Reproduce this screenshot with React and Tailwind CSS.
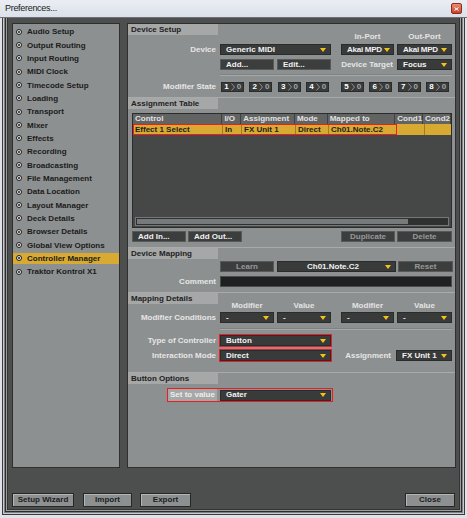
import React from 'react';

const menu = [
  'Audio Setup', 'Output Routing', 'Input Routing', 'MIDI Clock', 'Timecode Setup', 'Loading',
  'Transport', 'Mixer', 'Effects', 'Recording', 'Broadcasting', 'File Management', 'Data Location',
  'Layout Manager', 'Deck Details', 'Browser Details', 'Global View Options', 'Controller Manager',
  'Traktor Kontrol X1',
];

const Arrow = () => (
  <span className="shrink-0 ml-[2px] w-0 h-0 border-x-[3px] border-x-transparent border-t-[4px] border-t-[#f4c21b]" />
);

const Drop = ({ className = '', center, children }) => (
  <div className={`flex items-center h-[11px] bg-[#393b3b] border border-[#2a2b2b] pl-[5px] pr-[4px] text-[#f2f2f2] whitespace-nowrap overflow-hidden ${className}`}>
    <span className={center ? 'flex-1 text-center' : 'flex-1'}>{children}</span>
    <Arrow />
  </div>
);

const Btn = ({ className = '', dim, children }) => (
  <div
    className={`flex items-center h-[11px] bg-[#3c3e3e] border border-[#585a5a] whitespace-nowrap ${
      dim ? 'justify-center text-[#979999]' : 'pl-[5px] text-[#f0f0f0]'
    } ${className}`}
  >
    {children}
  </div>
);

const Mod = ({ n }) => (
  <div className="flex items-center h-[10px] w-[23px] bg-[#3a3c3c] border border-[#2a2b2b]">
    <span className="w-[9px] text-center text-white">{n}</span>
    <svg width="4" height="8" viewBox="0 0 4 8" className="shrink-0">
      <path d="M0.5 0.5 L3.5 4 L0.5 7.5" fill="none" stroke="#8f9191" strokeWidth="1" />
    </svg>
    <span className="flex-1 text-center text-[#a3a5a5]">0</span>
  </div>
);

const Header = ({ title, first, className = '' }) => (
  <div className={`${first ? '' : 'border-t border-[#a9abab]'} ${className}`}>
    <div className="h-[11px] w-[90px] bg-[#a6a8a8] pl-[3px] flex items-center text-[#222]">{title}</div>
  </div>
);

const Row = ({ label, className = '', children }) => (
  <div className={`flex items-center ${className}`}>
    <div className="w-[88px] text-right text-[#e6e6e6] whitespace-nowrap">{label}</div>
    <div className="ml-[4px] flex items-center">{children}</div>
  </div>
);

const Sep = ({ className = '' }) => (
  <div className={`ml-[92px] w-[232px] h-[2px] border-t border-[#7f8282] bg-[#a6a8a8] ${className}`} />
);

const cols = [
  { t: 'Control', w: 'w-[90px]' },
  { t: 'I/O', w: 'w-[19px]' },
  { t: 'Assignment', w: 'w-[54px]' },
  { t: 'Mode', w: 'w-[33px]' },
  { t: 'Mapped to', w: 'w-[68px]' },
  { t: 'Cond1', w: 'w-[28px]' },
  { t: 'Cond2', w: 'flex-1' },
];

const WinBtn = ({ className = '', children }) => (
  <div
    className={`h-[14px] flex items-center justify-center bg-[#8d9090] border border-[#262727] shadow-[inset_1px_1px_0_#b4b6b6] text-[#1c1c1c] ${className}`}
  >
    {children}
  </div>
);

export default function App() {
  return (
    <div className="w-[467px] h-[518px] overflow-hidden flex flex-col bg-[#dfe4eb] font-['Liberation_Sans',Arial,sans-serif] text-[8px] font-bold leading-none">
      {/* title bar */}
      <div className="h-[18px] shrink-0 flex items-center justify-between pl-[5px] pr-[5px] bg-linear-to-b from-[#eaeef4] to-[#dbe1e9] border-b border-[#6d7076]">
        <span className="text-[9px] font-normal tracking-[-0.3px] text-[#1a1a1a]">Preferences...</span>
        <div className="w-[11px] h-[11px] rounded-[2px] bg-linear-to-b from-[#eb8a6f] to-[#c8412a] border border-[#8c2f1f] flex items-center justify-center">
          <svg width="5" height="4" viewBox="0 0 5 4">
            <path d="M0.5 0.5 L4.5 3.5 M4.5 0.5 L0.5 3.5" stroke="white" strokeWidth="1" />
          </svg>
        </div>
      </div>

      {/* window frame */}
      <div className="flex-1 flex px-[2px] pb-[3px] bg-[#dfe3e9]">
        <div className="flex-1 flex border-x border-b border-[#3a3b3d]">
          <div className="flex-1 flex border-x border-b border-[#c9cccf]">
            <div className="flex-1 flex border-x border-b border-[#7f8183]">
              <div className="flex-1 flex border-x border-b border-[#2b2c2c]">
                <div className="flex-1 flex border-x border-b border-[#9c9e9e]">
                  <div className="flex-1 flex flex-col border-x border-b border-[#333434] bg-[#4d4f4f] pt-[5px] pl-[4px] pr-[3px]">
                    <div className="h-[445px] flex gap-[7px]">
                      {/* sidebar */}
                      <div className="w-[108px] border border-[#2e3030] bg-[#8d9090] pt-[2.8px] flex flex-col gap-[2.33px]">
                        {menu.map((m) => (
                          <div
                            key={m}
                            className={`h-[11px] flex items-center pl-[3px] text-[#1b1b1b] whitespace-nowrap ${
                              m === 'Controller Manager' ? 'bg-[#d8aa32]' : ''
                            }`}
                          >
                            <span className="w-[6px] h-[6px] rounded-full border border-[#1a1a1a] bg-[#e8e8e8] flex items-center justify-center mb-[1px]">
                              <span className="w-[2px] h-[2px] rounded-full bg-[#1a1a1a]" />
                            </span>
                            <span className="ml-[5px]">{m}</span>
                          </div>
                        ))}
                      </div>

                      {/* settings panel */}
                      <div className="flex-1 border border-[#2e3030] bg-[#8d9090] flex flex-col">
                        <Header title="Device Setup" first />
                        <div className="mt-[-2.7px] h-[10px] flex items-center text-[#e4e4e4]">
                          <div className="w-[213px]" />
                          <div className="w-[53px] text-center">In-Port</div>
                          <div className="ml-[3px] w-[55px] text-center">Out-Port</div>
                        </div>
                        <Row label="Device" className="mt-[1.7px]">
                          <Drop className="w-[111px]">Generic MIDI</Drop>
                          <Drop className="ml-[10px] w-[53px] pl-[3px] pr-[3px] tracking-[-0.25px]">Akai MPD</Drop>
                          <Drop className="ml-[3px] w-[55px] pl-[4px] pr-[3px] tracking-[-0.25px]">Akai MPD</Drop>
                        </Row>
                        <Row className="mt-[4px]">
                          <Btn className="w-[54px]">Add...</Btn>
                          <Btn className="ml-[3px] w-[54px]">Edit...</Btn>
                          <div className="w-[66px] pr-[4px] text-right text-[#e6e6e6] whitespace-nowrap">Device Target</div>
                          <Drop className="w-[55px] pl-[4px]">Focus</Drop>
                        </Row>
                        <Sep className="mt-[4px]" />
                        <Row label="Modifier State" className="mt-[6px]">
                          <div className="ml-[1px] flex gap-[5.33px]">
                            <Mod n="1" />
                            <Mod n="2" />
                            <Mod n="3" />
                            <Mod n="4" />
                          </div>
                          <div className="ml-[12px] flex gap-[5.33px]">
                            <Mod n="5" />
                            <Mod n="6" />
                            <Mod n="7" />
                            <Mod n="8" />
                          </div>
                        </Row>

                        <Header title="Assignment Table" className="mt-[5px]" />
                        <div className="ml-[4px] mt-[4px] w-[320px] h-[115px] border border-[#2b2c2c] bg-[#464848] flex flex-col">
                          <div className="flex h-[10px] bg-[#626464] text-[#e2e2e2] whitespace-nowrap">
                            {cols.map((c) => (
                              <div key={c.t} className={`${c.w} pl-[2px] flex items-center border-r border-[#404242]`}>
                                {c.t}
                              </div>
                            ))}
                          </div>
                          <div className="flex h-[11px] bg-[#d8aa32] text-[#1c1c1c] whitespace-nowrap">
                            <div className="flex outline-[1.5px] outline-solid outline-[#ec1c24] outline-offset-[-1px]">
                              <div className="w-[90px] pl-[2px] flex items-center border-r border-[#a07c22]">Effect 1 Select</div>
                              <div className="w-[19px] pl-[2px] flex items-center border-r border-[#a07c22]">In</div>
                              <div className="w-[54px] pl-[2px] flex items-center border-r border-[#a07c22]">FX Unit 1</div>
                              <div className="w-[33px] pl-[2px] flex items-center border-r border-[#a07c22]">Direct</div>
                              <div className="w-[68px] pl-[2px] flex items-center border-r border-[#a07c22]">Ch01.Note.C2</div>
                            </div>
                            <div className="w-[28px] border-r border-[#a07c22]" />
                            <div className="flex-1" />
                          </div>
                          <div className="mt-auto mb-[1px] ml-[2px] w-[314px] h-[9px] border border-[#767878] bg-[#2f3131] p-[1px]">
                            <div className="w-[271px] h-full bg-[#777a7a]" />
                          </div>
                        </div>
                        <div className="mt-[3px] flex items-center">
                          <Btn className="ml-[4px] w-[54px]">Add In...</Btn>
                          <Btn className="ml-[2px] w-[54px]">Add Out...</Btn>
                          <Btn dim className="ml-[99px] w-[54px]">Duplicate</Btn>
                          <Btn dim className="ml-[2px] w-[55px]">Delete</Btn>
                        </div>

                        <Header title="Device Mapping" className="mt-[5px]" />
                        <Row className="mt-[2px]">
                          <Btn dim className="w-[54px]">Learn</Btn>
                          <Drop center className="ml-[3px] w-[119px]">Ch01.Note.C2</Drop>
                          <Btn dim className="ml-[2px] w-[55px]">Reset</Btn>
                        </Row>
                        <Row label="Comment" className="mt-[4px]">
                          <div className="w-[232px] h-[11px] bg-[#1f2020] border border-[#4a4c4c]" />
                        </Row>

                        <Header title="Mapping Details" className="mt-[5px]" />
                        <div className="mt-[-2.3px] h-[8px] flex items-center text-[#e4e4e4]">
                          <div className="w-[92px]" />
                          <div className="w-[54px] text-center">Modifier</div>
                          <div className="ml-[3px] w-[54px] text-center">Value</div>
                          <div className="ml-[10px] w-[53px] text-center">Modifier</div>
                          <div className="ml-[3px] w-[55px] text-center">Value</div>
                        </div>
                        <Row label="Modifier Conditions" className="mt-[2.3px]">
                          <Drop className="w-[54px]">-</Drop>
                          <Drop className="ml-[3px] w-[54px]">-</Drop>
                          <Drop className="ml-[10px] w-[53px]">-</Drop>
                          <Drop className="ml-[3px] w-[55px]">-</Drop>
                        </Row>
                        <Sep className="mt-[5px]" />
                        <Row label="Type of Controller" className="mt-[5px]">
                          <Drop className="w-[111px] outline-[1.5px] outline-solid outline-[#ec1c24]">Button</Drop>
                        </Row>
                        <Row label="Interaction Mode" className="mt-[4px]">
                          <Drop className="w-[111px] outline-[1.5px] outline-solid outline-[#ec1c24]">Direct</Drop>
                          <div className="w-[65px] pr-[5px] text-right text-[#e6e6e6]">Assignment</div>
                          <Drop className="w-[56px] pl-[4px]">FX Unit 1</Drop>
                        </Row>

                        <Header title="Button Options" className="mt-[11px]" />
                        <div className="mt-[5px] flex">
                          <div className="ml-[40px] h-[12px] flex items-center pr-[1px] outline-[1.5px] outline-solid outline-[#ec1c24]">
                            <div className="w-[49px] h-[12px] bg-[#a6a8a8] flex items-center pl-[2px] text-[#eeeeee] whitespace-nowrap">Set to value</div>
                            <Drop className="ml-[3px] w-[111px]">Gater</Drop>
                          </div>
                        </div>
                      </div>
                    </div>

                    {/* bottom buttons */}
                    <div className="mt-[25px] flex items-center">
                      <WinBtn className="w-[62px]">Setup Wizard</WinBtn>
                      <WinBtn className="ml-[9px] w-[49px]">Import</WinBtn>
                      <WinBtn className="ml-[8px] w-[51px]">Export</WinBtn>
                      <WinBtn className="ml-auto mr-[1px] w-[50px]">Close</WinBtn>
                    </div>
                  </div>
                </div>
              </div>
            </div>
          </div>
        </div>
      </div>
    </div>
  );
}
